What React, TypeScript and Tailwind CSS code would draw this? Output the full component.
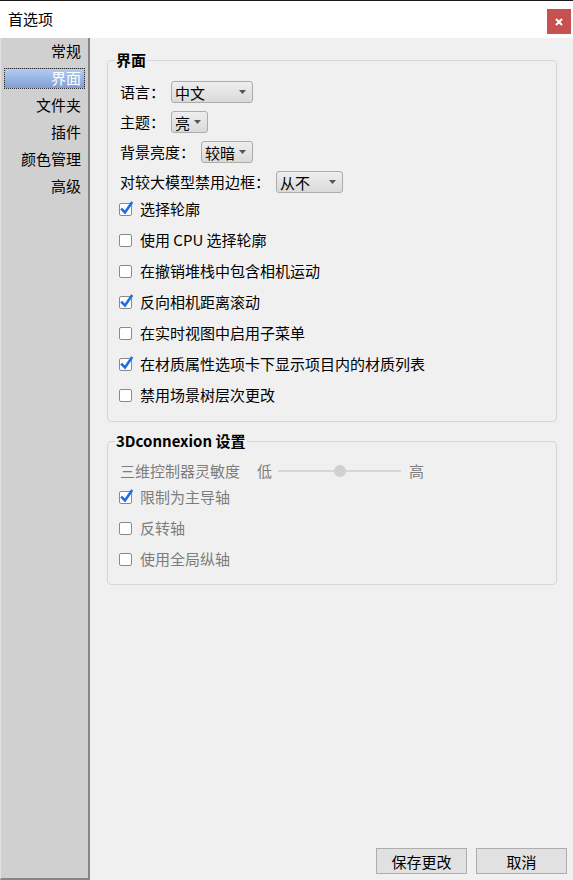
import React from "react";

function Check({ checked }: { checked?: boolean }) {
  return (
    <span className="relative inline-block w-[13px] h-[13px] shrink-0 rounded-[2px] border border-[#8a8a8a] bg-white">
      {checked && (
        <svg className="absolute left-[0px] -top-[3px]" width="14" height="15" viewBox="0 0 14 15">
          <path d="M2 8.5 L5 11.5 L11.5 2" stroke="#1f6fe0" strokeWidth="2.6" fill="none" strokeLinecap="square" />
        </svg>
      )}
    </span>
  );
}

function CheckRow({ label, checked, disabled }: { label: string; checked?: boolean; disabled?: boolean }) {
  return (
    <div className="flex items-center h-[31px] pl-[11px] gap-[8px]">
      <Check checked={checked} />
      <span className={disabled ? "text-[#7d7d7d]" : "text-black"}>{label}</span>
    </div>
  );
}

function Combo({ text, cls }: { text: string; cls: string }) {
  return (
    <div
      className={`flex items-center justify-between h-[22px] rounded-[3px] border border-[#acacac] bg-linear-to-b from-[#eeeeee] to-[#dadada] pl-[3px] pr-[6px] ${cls}`}
    >
      <span className="leading-none">{text}</span>
      <svg width="7" height="4" viewBox="0 0 7 4">
        <path d="M0 0H7L3.5 4Z" fill="#555" />
      </svg>
    </div>
  );
}

function ComboRow({ label, labelW, text, comboCls }: { label: string; labelW: string; text: string; comboCls: string }) {
  return (
    <div className="flex items-center h-[22px] pl-[12px]">
      <span className={`${labelW} shrink-0`}>{label}</span>
      <Combo text={text} cls={comboCls} />
    </div>
  );
}

function Group({ title, children, cls }: { title: string; children: React.ReactNode; cls: string }) {
  return (
    <div className={`relative rounded-[4px] border border-[#d6d6d6] ${cls}`}>
      <span className="absolute left-[7px] -top-[11px] bg-[#f0f0f0] px-[1px] font-bold leading-[20px] text-black">
        {title}
      </span>
      {children}
    </div>
  );
}

export default function App() {
  const side = ["常规", "界面", "文件夹", "插件", "颜色管理", "高级"];
  return (
    <div className="w-[573px] h-[880px] flex flex-col bg-[#f0f0f0] text-[15px] text-black font-['Noto_Sans_CJK_SC','Noto_Sans',sans-serif] overflow-hidden">
      {/* title bar */}
      <div className="h-[38px] shrink-0 border-t border-[#1b1b1b] bg-white flex items-start justify-between">
        <span className="pl-[8px] pt-[8px] leading-[20px]">首选项</span>
        <div className="mt-[8px] mr-[2px] w-[24px] h-[25px] bg-[#c75050] flex items-center justify-center">
          <svg width="8" height="8" viewBox="0 0 8 8">
            <path d="M1 1L7 7M7 1L1 7" stroke="white" strokeWidth="2" />
          </svg>
        </div>
      </div>

      <div className="flex flex-1 min-h-0">
        {/* sidebar */}
        <div className="w-[90px] shrink-0 bg-[#d0d0d0] border-l border-l-[#e2e2e2] border-r-2 border-r-[#868686] border-b-2 border-b-[#868686] flex flex-col gap-[6px] pt-[3px]">
          {side.map((s, i) =>
            i === 1 ? (
              <div
                key={s}
                className="mx-[3px] h-[21px] flex items-center justify-end pr-[3px] text-white border border-dotted border-[#2a2a2a] bg-linear-to-b from-[#b2ccf2] to-[#819fd6]"
              >
                {s}
              </div>
            ) : (
              <div key={s} className="mx-[3px] h-[21px] flex items-center justify-end pr-[4px]">
                {s}
              </div>
            )
          )}
        </div>

        {/* content */}
        <div className="flex-1 flex flex-col pt-[22px] pl-[17px] pr-[16px]">
          <Group title="界面" cls="pt-[20px] pb-[10px]">
            <div className="flex flex-col gap-[8px]">
              <ComboRow label="语言：" labelW="w-[51px]" text="中文" comboCls="w-[82px]" />
              <ComboRow label="主题：" labelW="w-[51px]" text="亮" comboCls="w-[37px]" />
              <ComboRow label="背景亮度：" labelW="w-[81px]" text="较暗" comboCls="w-[52px]" />
              <ComboRow label="对较大模型禁用边框：" labelW="w-[156px]" text="从不" comboCls="w-[67px]" />
            </div>
            <div className="mt-[1px] flex flex-col">
              <CheckRow label="选择轮廓" checked />
              <CheckRow label="使用 CPU 选择轮廓" />
              <CheckRow label="在撤销堆栈中包含相机运动" />
              <CheckRow label="反向相机距离滚动" checked />
              <CheckRow label="在实时视图中启用子菜单" />
              <CheckRow label="在材质属性选项卡下显示项目内的材质列表" checked />
              <CheckRow label="禁用场景树层次更改" />
            </div>
          </Group>

          <Group title="3Dconnexion 设置" cls="mt-[19px] pt-[18px] pb-[9px]">
            <div className="flex items-center h-[22px] pl-[12px] text-[#7d7d7d]">
              <span className="w-[137px] shrink-0">三维控制器灵敏度</span>
              <span>低</span>
              <div className="ml-[6px] w-[123px] h-[12px] flex items-center">
                <div className="flex-1 h-[2px] bg-[#d6d6d6]" />
                <div className="w-[12px] h-[12px] rounded-full bg-[#d0d0d0]" />
                <div className="flex-1 h-[2px] bg-[#d6d6d6]" />
              </div>
              <span className="ml-[8px]">高</span>
            </div>
            <div className="flex flex-col">
              <CheckRow label="限制为主导轴" checked disabled />
              <CheckRow label="反转轴" disabled />
              <CheckRow label="使用全局纵轴" disabled />
            </div>
          </Group>

          <div className="mt-auto mb-[6px] -mr-[10px] flex justify-end gap-[9px]">
            <button className="w-[91px] h-[26px] border border-[#adadad] bg-[#e1e1e1] leading-none">保存更改</button>
            <button className="w-[91px] h-[26px] border border-[#adadad] bg-[#e1e1e1] leading-none">取消</button>
          </div>
        </div>
      </div>
    </div>
  );
}
